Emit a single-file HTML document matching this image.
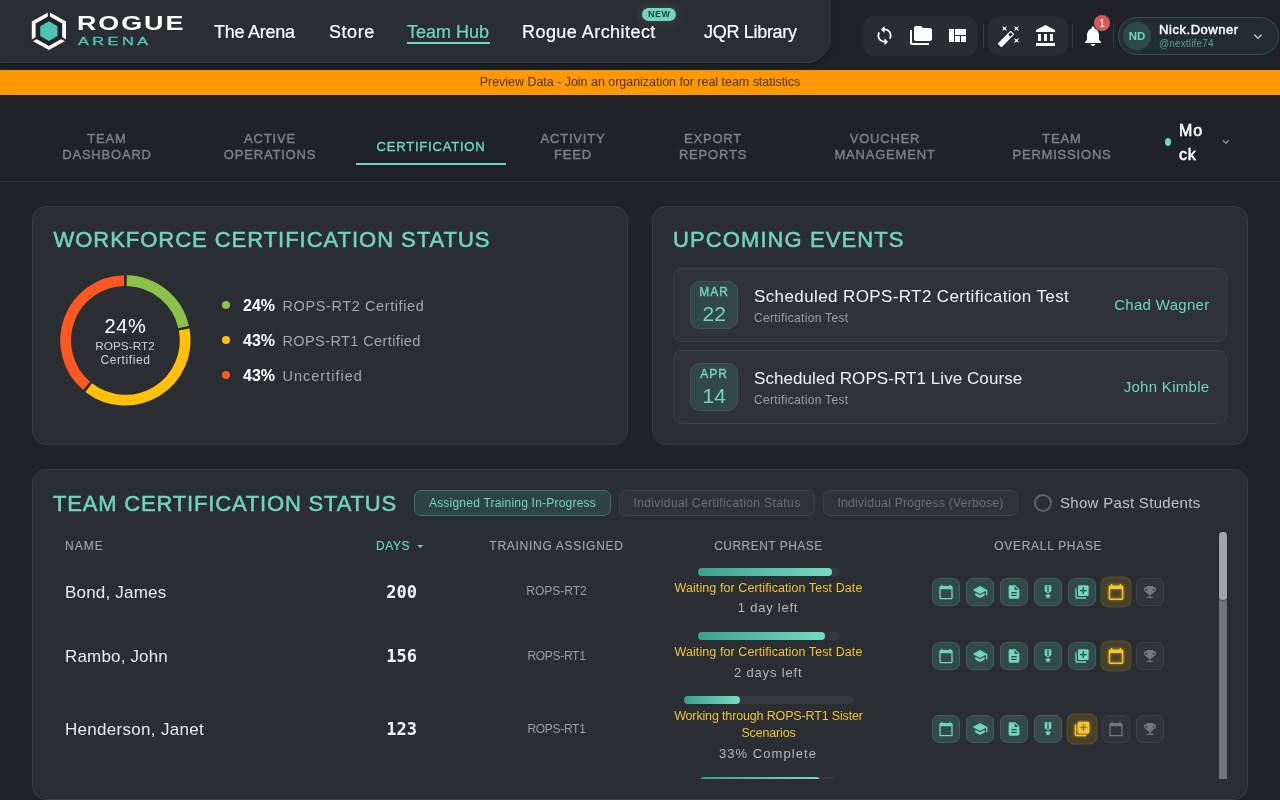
<!DOCTYPE html>
<html lang="en">
<head>
<meta charset="utf-8">
<title>Rogue Arena - Team Hub - Certification</title>
<style>
*{box-sizing:border-box;margin:0;padding:0}
html,body{width:1280px;height:800px;overflow:hidden;background:#1f2226;font-family:"Liberation Sans",sans-serif;color:#fff}
.abs{position:absolute}
.t{position:absolute;white-space:nowrap;line-height:1}
.c{transform:translateX(-50%);text-align:center}
#hdr{position:absolute;left:-1px;top:-1px;width:832px;height:64px;background:#2a2d32;border:1px solid #373a40;border-bottom-right-radius:25px;box-shadow:0 2px 6px rgba(0,0,0,.22)}
.nav{font-size:18px;color:#fff;top:22.600px;-webkit-text-stroke:.2px}
.grp{position:absolute;background:#292c31;border-radius:12px}
.sep{position:absolute;width:1px;background:#383b41;top:24px;height:24px}
svg.i{position:absolute;fill:#fff}
#banner{position:absolute;left:0;top:70px;width:1280px;height:25px;background:#fe9905}
.tab{-webkit-text-stroke:.4px;font-size:13px;letter-spacing:.8px;color:#7d8187;line-height:16px;text-align:center;transform:translateX(-50%)}
.card{position:absolute;background:#2a2d32;border:1px solid #373a40;border-radius:14px}
.h{-webkit-text-stroke:.5px;font-size:22px;letter-spacing:.97px;color:#6fd6bf}
.ev{position:absolute;left:673px;width:554px;height:74px;background:#2f3238;border:1px solid #3b3e44;border-radius:9px}
.db{position:absolute;left:690px;width:48px;height:48px;background:#324746;border:1px solid #3b5955;border-radius:10px}
.chip{position:absolute;top:490px;height:26px;border-radius:7px;font-size:12px;line-height:24px;text-align:center;white-space:nowrap}
.chip.on{background:#2e4442;border:1px solid #407268;color:#6fd6bf}
.chip.off{background:#2f3237;border:1px solid #3e4147;color:#6a6e75}
.th{-webkit-text-stroke:.12px;font-size:12px;letter-spacing:1.2px;color:#a3a7ad}
.nm{font-size:17px;letter-spacing:.6px;color:#e9eaec;left:65px}
.dy{font-family:"DejaVu Sans Mono",monospace;font-weight:bold;font-size:17px;color:#f2f3f4}
.tr{font-size:12px;color:#9a9ea5}
.bar{position:absolute;height:8px;border-radius:4px;background:#34373d}
.bar i{position:absolute;left:0;top:0;height:8px;border-radius:4px;background:linear-gradient(90deg,#3f9f8e,#74dcc5)}
.ph{font-size:12.5px;letter-spacing:.09px;color:#f0c33c;line-height:17px;text-align:center;transform:translateX(-50%)}
.sub{font-size:13px;letter-spacing:.77px;color:#b4b7bc}
.ib{position:absolute;width:28px;height:28px;border-radius:7px;background:#33494a;border:1px solid #3d635d}
.ib svg{position:absolute;left:5px;top:5px;width:16px;height:16px;fill:#6fd6bf}
.ib.y{background:#474129;border-color:#5a4f2b;transform:scale(1.1)}
.ib.y svg{fill:#f7c52f;filter:drop-shadow(0 0 1.500px rgba(247,197,47,.7))}
.ib.g{background:#30333a;border-color:#3d4046}
.ib.g svg{fill:#72767d}
.teal{color:#6fd6bf !important}
#clip{position:absolute;left:34px;top:530px;width:1212px;height:249.300px;overflow:hidden}
</style>
</head>
<body>
<div id="root" style="position:absolute;left:0;top:0;width:1280px;height:800px;overflow:hidden;will-change:transform">
<!-- HEADER -->
<div id="hdr"></div>
<svg class="abs" style="left:0;top:0" width="90" height="62" viewBox="0 0 90 62">
 <polygon points="48.90,12.10 66.00,21.60 66.00,40.60 48.90,50.10 31.80,40.60 31.80,21.60" fill="#fff"/>
 <path d="M48.90 31.10 L48.90 7.35 M48.90 31.10 L70.28 42.98 M48.90 31.10 L27.52 42.98" stroke="#2a2d32" stroke-width="2.200" fill="none"/>
 <polygon points="48.90,16.10 62.20,23.60 62.20,38.60 48.90,46.10 35.60,38.60 35.60,23.60" fill="#202327"/>
 <polygon points="48.90,21.25 57.50,26.18 57.50,36.02 48.90,40.95 40.30,36.02 40.30,26.18" fill="#4fc4b3"/>
</svg>
<div class="t" id="lg1" style="left:76.700px;top:13.800px;font-size:19.500px;font-weight:bold;letter-spacing:1.400px;color:#fff;transform:scaleX(1.38);transform-origin:0 0">ROGUE</div>
<div class="t" id="lg2" style="left:78px;top:36px;font-size:10.500px;-webkit-text-stroke:.3px;letter-spacing:2.250px;color:#4fc4b3;transform:scaleX(1.55);transform-origin:0 0">ARENA</div>
<div class="t nav" id="n1" style="left:214px;letter-spacing:-.25px">The Arena</div>
<div class="t nav" id="n2" style="left:329px;letter-spacing:.55px">Store</div>
<div class="t nav teal" id="n3" style="left:407px">Team Hub</div>
<div class="abs" style="left:407px;top:42px;width:83px;height:2px;background:#6fd6bf"></div>
<div class="t nav" id="n4" style="left:522px;letter-spacing:.45px">Rogue Architect</div>
<div class="t" id="new" style="left:642px;top:8px;width:34px;height:12.500px;border-radius:6.500px;background:#6fd6bf;color:#1f3a36;font-size:9px;font-weight:bold;letter-spacing:.4px;text-indent:.4px;line-height:13px;text-align:center;box-shadow:0 0 9px 2px rgba(200,220,220,.13)">NEW</div>
<div class="t nav" id="n5" style="left:704px;letter-spacing:-.3px">JQR Library</div>
<div id="hdrR">
<div class="grp" style="left:863px;top:16px;width:115px;height:40px"></div>
<svg class="i" style="left:874.200px;top:25px" width="21" height="21" viewBox="0 0 24 24"><path d="M12 4V1L8 5l4 4V6c3.310 0 6 2.690 6 6 0 1.010-.25 1.970-.7 2.800l1.460 1.460C19.540 15.030 20 13.570 20 12c0-4.420-3.580-8-8-8zm0 14c-3.310 0-6-2.690-6-6 0-1.010.25-1.970.7-2.800L5.240 7.740C4.460 8.970 4 10.430 4 12c0 4.420 3.580 8 8 8v3l4-4-4-4v3z"/></svg>
<svg class="i" style="left:909px;top:24px" width="24" height="24" viewBox="0 0 24 24"><path d="M3 6H1v13c0 1.100.9 2 2 2h17v-2H3V6z"/><path d="M21 4h-7l-2-2H7c-1.100 0-1.990.9-1.990 2L5 15c0 1.100.9 2 2 2h14c1.100 0 2-.9 2-2V6c0-1.100-.9-2-2-2z"/></svg>
<svg class="i" style="left:944.500px;top:24px" width="24" height="24" viewBox="0 0 24 24"><path d="M10 18h5v-6h-5v6zm-6 0h5V5H4v13zm12 0h5v-6h-5v6zM10 5v6h11V5H10z"/></svg>
<div class="sep" style="left:983px"></div>
<div class="grp" style="left:988px;top:16px;width:80px;height:40px"></div>
<svg class="i" style="left:997px;top:24px" width="24" height="24" viewBox="0 0 24 24"><path d="M7.500 5.600L10 7 8.600 4.500 10 2 7.500 3.400 5 2l1.400 2.500L5 7zm12 9.800L17 14l1.400 2.500L17 19l2.500-1.400L22 19l-1.400-2.500L22 14zM22 2l-2.500 1.400L17 2l1.400 2.500L17 7l2.500-1.400L22 7l-1.400-2.500zm-7.630 5.290c-.39-.39-1.020-.39-1.410 0L1.290 18.960c-.39.39-.39 1.020 0 1.410l2.340 2.340c.39.390 1.020.390 1.410 0L16.700 11.050c.39-.39.39-1.020 0-1.410l-2.330-2.350zm-1.030 5.490l-2.120-2.120 2.440-2.440 2.120 2.120-2.440 2.440z"/></svg>
<svg class="i" style="left:1034px;top:24px" width="24" height="24" viewBox="0 0 24 24"><path d="M4 10v7h3v-7H4zm6 0v7h3v-7h-3zM2 22h19v-3H2v3zm14-12v7h3v-7h-3zm-4.500-9L2 6v2h19V6l-9.500-5z"/></svg>
<div class="sep" style="left:1072px"></div>
<svg class="i" style="left:1081px;top:24px" width="24" height="24" viewBox="0 0 24 24"><path d="M12 22c1.100 0 2-.9 2-2h-4c0 1.100.89 2 2 2zm6-6v-5c0-3.070-1.640-5.640-4.500-6.320V4c0-.83-.67-1.500-1.500-1.500s-1.500.67-1.500 1.500v.68C7.630 5.360 6 7.920 6 11v5l-2 2v1h16v-1l-2-2z"/></svg>
<div class="t" id="badge" style="left:1094px;top:15px;width:16px;height:16px;border-radius:50%;background:#d8575a;color:#fff;font-size:11px;line-height:16px;text-align:center">1</div>
<div class="sep" style="left:1113px"></div>
<div class="abs" id="pill" style="left:1118px;top:17px;width:161px;height:38px;border-radius:19px;background:#222d2f;border:1px solid #37514d"></div>
<div class="t" id="av" style="left:1123px;top:22px;width:28px;height:28px;border-radius:50%;background:#2c4b47;color:#6fd6bf;font-size:11.500px;font-weight:bold;line-height:28px;text-align:center">ND</div>
<div class="t" id="un" style="left:1159px;top:23px;font-size:13px;-webkit-text-stroke:.45px;letter-spacing:.55px;color:#fff">Nick.Downer</div>
<div class="t" id="uh" style="left:1159px;top:39px;font-size:10px;letter-spacing:.15px;color:#4fa391">@nextlife74</div>
<svg class="abs" style="left:1252px;top:32px" width="12" height="9" viewBox="0 0 12 9"><path d="M2.300 2.600 L6 6.200 L9.700 2.600" fill="none" stroke="#b7babf" stroke-width="1.500"/></svg>
</div>
<!-- BANNER -->
<div id="banner"><div class="t c" id="bt" style="left:640px;top:6px;font-size:12.500px;color:#50340a;letter-spacing:-.03px">Preview Data - Join an organization for real team statistics</div></div>
<!-- TABS -->
<div id="tabs">
<div class="t tab" id="tb1" style="left:107px;top:131px">TEAM<br>DASHBOARD</div>
<div class="t tab" id="tb2" style="left:270px;top:131px">ACTIVE<br>OPERATIONS</div>
<div class="t tab teal" id="tb3" style="left:431px;top:139px">CERTIFICATION</div>
<div class="abs" style="left:356px;top:163px;width:150px;height:2px;background:#6fd6bf"></div>
<div class="t tab" id="tb4" style="left:573px;top:131px">ACTIVITY<br>FEED</div>
<div class="t tab" id="tb5" style="left:713px;top:131px">EXPORT<br>REPORTS</div>
<div class="t tab" id="tb6" style="left:885px;top:131px">VOUCHER<br>MANAGEMENT</div>
<div class="t tab" id="tb7" style="left:1062px;top:131px">TEAM<br>PERMISSIONS</div>
<div class="abs" style="left:1164.700px;top:138px;width:6.500px;height:8.200px;border-radius:50%;background:#6fd6bf"></div>
<div class="t" id="mock" style="left:1179px;top:119px;font-size:16px;-webkit-text-stroke:.55px;line-height:24px;color:#fff;letter-spacing:.8px">Mo<br>ck</div>
<svg class="abs" style="left:1221px;top:138px" width="10" height="8" viewBox="0 0 10 8"><path d="M2 2.300 L4.900 5.300 L7.800 2.300" fill="none" stroke="#8d9197" stroke-width="1.300"/></svg>
<div class="abs" style="left:0;top:181px;width:1280px;height:1px;background:#2d3035"></div>
</div>
<!-- CARDS -->
<div id="cards">
<div class="card" style="left:32px;top:206px;width:596px;height:239px"></div>
<div class="t h" id="h1" style="left:53.500px;top:229.200px">WORKFORCE CERTIFICATION STATUS</div>
<svg class="abs" style="left:0;top:0" width="640" height="460" viewBox="0 0 640 460"><g fill="none" stroke-width="10.800"><path d="M126.76 280.62 A59.8 59.8 0 0 1 183.66 326.91" stroke="#8bc34a"/><path d="M184.21 329.56 A59.8 59.8 0 0 1 88.72 387.63" stroke="#ffc107"/><path d="M86.62 385.92 A59.8 59.8 0 0 1 124.04 280.62" stroke="#ff5722"/></g></svg>
<div class="t c" id="d1" style="left:125.500px;top:315.900px;font-size:20px;color:#fff;letter-spacing:.7px">24%</div>
<div class="t c" id="d2" style="left:125px;top:340.500px;font-size:11.800px;color:#cfd1d4">ROPS-RT2</div>
<div class="t c" id="d3" style="left:125.500px;top:354px;font-size:12px;color:#cfd1d4;letter-spacing:.6px">Certified</div>
<div class="abs" style="left:222px;top:301px;width:8px;height:8px;border-radius:50%;background:#8bc34a"></div>
<div class="abs" style="left:222px;top:336px;width:8px;height:8px;border-radius:50%;background:#ffc107"></div>
<div class="abs" style="left:222px;top:371px;width:8px;height:8px;border-radius:50%;background:#ff5722"></div>
<div class="t" id="l1a" style="left:243px;top:297.7px;font-size:16px;font-weight:bold;color:#fff">24%</div>
<div class="t" id="l1b" style="left:282.500px;top:298.5px;font-size:14.500px;letter-spacing:.6px;color:#a3a7ad">ROPS-RT2 Certified</div>
<div class="t" id="l2a" style="left:243px;top:332.7px;font-size:16px;font-weight:bold;color:#fff">43%</div>
<div class="t" id="l2b" style="left:282.500px;top:333.5px;font-size:14.500px;letter-spacing:.4px;color:#a3a7ad">ROPS-RT1 Certified</div>
<div class="t" id="l3a" style="left:243px;top:367.7px;font-size:16px;font-weight:bold;color:#fff">43%</div>
<div class="t" id="l3b" style="left:282.500px;top:368.5px;font-size:14.500px;letter-spacing:1px;color:#a3a7ad">Uncertified</div>

<div class="card" style="left:652px;top:206px;width:596px;height:239px"></div>
<div class="t h" id="h2" style="left:673px;top:229.200px;letter-spacing:1.1px">UPCOMING EVENTS</div>
<div class="ev" style="top:268px"></div>
<div class="db" style="top:281px"></div>
<div class="t c teal" id="e1m" style="left:714px;top:286.400px;font-size:12px;letter-spacing:1px;-webkit-text-stroke:.35px">MAR</div>
<div class="t c teal" id="e1d" style="left:714.200px;top:302.600px;font-size:21px">22</div>
<div class="t" id="e1t" style="left:754px;top:287.700px;font-size:17px;letter-spacing:.39px;color:#f1f2f3">Scheduled ROPS-RT2 Certification Test</div>
<div class="t" id="e1s" style="left:754px;top:312px;font-size:12px;letter-spacing:.33px;color:#9a9ea5">Certification Test</div>
<div class="t teal" id="e1n" style="right:70.500px;top:296.700px;font-size:15px;letter-spacing:.3px;color:#5ec4ad">Chad Wagner</div>
<div class="ev" style="top:350px"></div>
<div class="db" style="top:363px"></div>
<div class="t c teal" id="e2m" style="left:714px;top:368.400px;font-size:12px;letter-spacing:1px;-webkit-text-stroke:.35px">APR</div>
<div class="t c teal" id="e2d" style="left:714.200px;top:384.600px;font-size:21px">14</div>
<div class="t" id="e2t" style="left:754px;top:369.700px;font-size:17px;letter-spacing:.07px;color:#f1f2f3">Scheduled ROPS-RT1 Live Course</div>
<div class="t" id="e2s" style="left:754px;top:394px;font-size:12px;letter-spacing:.33px;color:#9a9ea5">Certification Test</div>
<div class="t teal" id="e2n" style="right:70.500px;top:378.700px;font-size:15px;letter-spacing:.3px;color:#5ec4ad">John Kimble</div>

<div class="card" style="left:32px;top:469px;width:1216px;height:331px"></div>
<div class="t h" id="h3" style="left:53px;top:492.700px;letter-spacing:.82px">TEAM CERTIFICATION STATUS</div>
<div class="chip on" id="c1" style="left:414px;width:197px;letter-spacing:.22px">Assigned Training In-Progress</div>
<div class="chip off" id="c2" style="left:619px;width:196px;letter-spacing:.4px">Individual Certification Status</div>
<div class="chip off" id="c3" style="left:823px;width:195px;letter-spacing:.3px">Individual Progress (Verbose)</div>
<div class="abs" style="left:1034px;top:494px;width:18px;height:18px;border-radius:50%;border:2px solid #5f636a"></div>
<div class="t" id="sps" style="left:1060px;top:495.200px;font-size:15px;letter-spacing:.3px;color:#c0c2c7">Show Past Students</div>
<div class="t th" id="th1" style="left:65px;top:540px;letter-spacing:1px">NAME</div>
<div class="t th teal" id="th2" style="left:376px;top:540px;letter-spacing:.6px">DAYS</div>
<svg class="i" style="left:412.800px;top:538.500px;fill:#6fd6bf" width="14.400" height="14.400" viewBox="0 0 24 24"><path d="M7 10l5 5 5-5z"/></svg>
<div class="t th c" id="th3" style="left:556.500px;top:540px;letter-spacing:.72px">TRAINING ASSIGNED</div>
<div class="t th c" id="th4" style="left:768.500px;top:540px;letter-spacing:.47px">CURRENT PHASE</div>
<div class="t th c" id="th5" style="left:1048.300px;top:540px;letter-spacing:.7px">OVERALL PHASE</div>
<div id="clip"><div class="abs" id="rows" style="left:-34px;top:-530px;width:1280px;height:900px">
<div class="t nm" id="r1n" style="top:583.900px;letter-spacing:.2px">Bond, James</div>
<div class="t dy c" id="r1d" style="left:401.600px;top:584.200px">200</div>
<div class="t tr c" id="r1t" style="left:556.500px;top:585.300px">ROPS-RT2</div>
<div class="bar" style="left:698px;top:568px;width:142px"><i style="width:134px"></i></div>
<div class="t ph" id="r1p" style="left:768.500px;top:580px">Waiting for Certification Test Date</div>
<div class="t sub c" id="r1s" style="left:768px;top:601px">1 day left</div>
<div class="ib" style="left:932px;top:578px"><svg viewBox="0 0 24 24"><path d="M20 3h-1V1h-2v2H7V1H5v2H4c-1.100 0-2 .9-2 2v16c0 1.100.9 2 2 2h16c1.100 0 2-.9 2-2V5c0-1.100-.9-2-2-2zm0 18H4V8h16v13z"/></svg></div>
<div class="ib" style="left:966px;top:578px"><svg viewBox="0 0 24 24"><path d="M5 13.180v4L12 21l7-3.820v-4L12 17l-7-3.820zM12 3L1 9l11 6 9-4.910V17h2V9L12 3z"/></svg></div>
<div class="ib" style="left:1000px;top:578px"><svg viewBox="0 0 24 24"><path d="M14 2H6c-1.100 0-1.990.9-1.990 2L4 20c0 1.100.89 2 1.990 2H18c1.100 0 2-.9 2-2V8l-6-6zm2 16H8v-2h8v2zm0-4H8v-2h8v2zm-3-5V3.500L18.500 9H13z"/></svg></div>
<div class="ib" style="left:1034px;top:578px"><svg viewBox="0 0 24 24"><path d="M17 10.430V2H7v8.430c0 .35.18.68.49.86l4.180 2.510-.99 2.340-3.410.29 2.590 2.240L9.070 22 12 20.230 14.930 22l-.78-3.330 2.590-2.240-3.410-.29-.99-2.340 4.180-2.510c.3-.18.48-.5.48-.86zm-4 1.800l-1 .6-1-.6V3h2v9.230z"/></svg></div>
<div class="ib" style="left:1068px;top:578px"><svg viewBox="0 0 24 24"><path d="M4 6H2v14c0 1.100.9 2 2 2h14v-2H4V6zm16-4H8c-1.100 0-2 .9-2 2v12c0 1.100.9 2 2 2h12c1.100 0 2-.9 2-2V4c0-1.100-.9-2-2-2zm-1 9h-4v4h-2v-4H9V9h4V5h2v4h4v2z"/></svg></div>
<div class="ib y" style="left:1102px;top:578px"><svg viewBox="0 0 24 24"><path d="M20 3h-1V1h-2v2H7V1H5v2H4c-1.100 0-2 .9-2 2v16c0 1.100.9 2 2 2h16c1.100 0 2-.9 2-2V5c0-1.100-.9-2-2-2zm0 18H4V8h16v13z"/></svg></div>
<div class="ib g" style="left:1136px;top:578px"><svg viewBox="0 0 24 24"><path d="M19 5h-2V3H7v2H5c-1.100 0-2 .9-2 2v1c0 2.550 1.920 4.630 4.390 4.940.63 1.500 1.980 2.630 3.610 2.960V19H7v2h10v-2h-4v-3.100c1.630-.33 2.980-1.460 3.610-2.960C19.080 12.630 21 10.550 21 8V7c0-1.100-.9-2-2-2zM5 8V7h2v3.820C5.840 10.400 5 9.300 5 8zm14 0c0 1.300-.84 2.400-2 2.820V7h2v1z"/></svg></div>
<div class="t nm" id="r2n" style="top:647.900px;letter-spacing:.17px">Rambo, John</div>
<div class="t dy c" id="r2d" style="left:401.600px;top:648.200px">156</div>
<div class="t tr c" id="r2t" style="left:556.500px;top:649.500px;letter-spacing:-.3px">ROPS-RT1</div>
<div class="bar" style="left:698px;top:632px;width:142px"><i style="width:127px"></i></div>
<div class="t ph" id="r2p" style="left:768.500px;top:644px">Waiting for Certification Test Date</div>
<div class="t sub c" id="r2s" style="left:768.200px;top:666px;letter-spacing:.85px">2 days left</div>
<div class="ib" style="left:932px;top:642px"><svg viewBox="0 0 24 24"><path d="M20 3h-1V1h-2v2H7V1H5v2H4c-1.100 0-2 .9-2 2v16c0 1.100.9 2 2 2h16c1.100 0 2-.9 2-2V5c0-1.100-.9-2-2-2zm0 18H4V8h16v13z"/></svg></div>
<div class="ib" style="left:966px;top:642px"><svg viewBox="0 0 24 24"><path d="M5 13.180v4L12 21l7-3.820v-4L12 17l-7-3.820zM12 3L1 9l11 6 9-4.910V17h2V9L12 3z"/></svg></div>
<div class="ib" style="left:1000px;top:642px"><svg viewBox="0 0 24 24"><path d="M14 2H6c-1.100 0-1.990.9-1.990 2L4 20c0 1.100.89 2 1.990 2H18c1.100 0 2-.9 2-2V8l-6-6zm2 16H8v-2h8v2zm0-4H8v-2h8v2zm-3-5V3.500L18.500 9H13z"/></svg></div>
<div class="ib" style="left:1034px;top:642px"><svg viewBox="0 0 24 24"><path d="M17 10.430V2H7v8.430c0 .35.18.68.49.86l4.180 2.510-.99 2.340-3.410.29 2.590 2.240L9.070 22 12 20.230 14.930 22l-.78-3.330 2.590-2.240-3.410-.29-.99-2.340 4.180-2.510c.3-.18.48-.5.48-.86zm-4 1.800l-1 .6-1-.6V3h2v9.230z"/></svg></div>
<div class="ib" style="left:1068px;top:642px"><svg viewBox="0 0 24 24"><path d="M4 6H2v14c0 1.100.9 2 2 2h14v-2H4V6zm16-4H8c-1.100 0-2 .9-2 2v12c0 1.100.9 2 2 2h12c1.100 0 2-.9 2-2V4c0-1.100-.9-2-2-2zm-1 9h-4v4h-2v-4H9V9h4V5h2v4h4v2z"/></svg></div>
<div class="ib y" style="left:1102px;top:642px"><svg viewBox="0 0 24 24"><path d="M20 3h-1V1h-2v2H7V1H5v2H4c-1.100 0-2 .9-2 2v16c0 1.100.9 2 2 2h16c1.100 0 2-.9 2-2V5c0-1.100-.9-2-2-2zm0 18H4V8h16v13z"/></svg></div>
<div class="ib g" style="left:1136px;top:642px"><svg viewBox="0 0 24 24"><path d="M19 5h-2V3H7v2H5c-1.100 0-2 .9-2 2v1c0 2.550 1.920 4.630 4.390 4.940.63 1.500 1.980 2.630 3.610 2.960V19H7v2h10v-2h-4v-3.100c1.630-.33 2.980-1.460 3.610-2.960C19.080 12.630 21 10.550 21 8V7c0-1.100-.9-2-2-2zM5 8V7h2v3.820C5.840 10.400 5 9.300 5 8zm14 0c0 1.300-.84 2.400-2 2.820V7h2v1z"/></svg></div>
<div class="t nm" id="r3n" style="top:721px;letter-spacing:.3px">Henderson, Janet</div>
<div class="t dy c" id="r3d" style="left:401.600px;top:721.200px">123</div>
<div class="t tr c" id="r3t" style="left:556.500px;top:723px;letter-spacing:-.3px">ROPS-RT1</div>
<div class="bar" style="left:684px;top:696px;width:170px"><i style="width:56px"></i></div>
<div class="t ph" id="r3p" style="left:768.500px;top:708px;letter-spacing:-.15px">Working through ROPS-RT1 Sister<br>Scenarios</div>
<div class="t sub c" id="r3s" style="left:768px;top:746.500px;letter-spacing:1.07px">33% Complete</div>
<div class="ib" style="left:932px;top:715px"><svg viewBox="0 0 24 24"><path d="M20 3h-1V1h-2v2H7V1H5v2H4c-1.100 0-2 .9-2 2v16c0 1.100.9 2 2 2h16c1.100 0 2-.9 2-2V5c0-1.100-.9-2-2-2zm0 18H4V8h16v13z"/></svg></div>
<div class="ib" style="left:966px;top:715px"><svg viewBox="0 0 24 24"><path d="M5 13.180v4L12 21l7-3.820v-4L12 17l-7-3.820zM12 3L1 9l11 6 9-4.910V17h2V9L12 3z"/></svg></div>
<div class="ib" style="left:1000px;top:715px"><svg viewBox="0 0 24 24"><path d="M14 2H6c-1.100 0-1.990.9-1.990 2L4 20c0 1.100.89 2 1.990 2H18c1.100 0 2-.9 2-2V8l-6-6zm2 16H8v-2h8v2zm0-4H8v-2h8v2zm-3-5V3.500L18.500 9H13z"/></svg></div>
<div class="ib" style="left:1034px;top:715px"><svg viewBox="0 0 24 24"><path d="M17 10.430V2H7v8.430c0 .35.18.68.49.86l4.180 2.510-.99 2.340-3.410.29 2.590 2.240L9.070 22 12 20.230 14.930 22l-.78-3.330 2.590-2.240-3.410-.29-.99-2.340 4.180-2.510c.3-.18.48-.5.48-.86zm-4 1.800l-1 .6-1-.6V3h2v9.230z"/></svg></div>
<div class="ib y" style="left:1068px;top:715px"><svg viewBox="0 0 24 24"><path d="M4 6H2v14c0 1.100.9 2 2 2h14v-2H4V6zm16-4H8c-1.100 0-2 .9-2 2v12c0 1.100.9 2 2 2h12c1.100 0 2-.9 2-2V4c0-1.100-.9-2-2-2zm-1 9h-4v4h-2v-4H9V9h4V5h2v4h4v2z"/></svg></div>
<div class="ib g" style="left:1102px;top:715px"><svg viewBox="0 0 24 24"><path d="M20 3h-1V1h-2v2H7V1H5v2H4c-1.100 0-2 .9-2 2v16c0 1.100.9 2 2 2h16c1.100 0 2-.9 2-2V5c0-1.100-.9-2-2-2zm0 18H4V8h16v13z"/></svg></div>
<div class="ib g" style="left:1136px;top:715px"><svg viewBox="0 0 24 24"><path d="M19 5h-2V3H7v2H5c-1.100 0-2 .9-2 2v1c0 2.550 1.920 4.630 4.390 4.940.63 1.500 1.980 2.630 3.610 2.960V19H7v2h10v-2h-4v-3.100c1.630-.33 2.980-1.460 3.610-2.960C19.080 12.630 21 10.550 21 8V7c0-1.100-.9-2-2-2zM5 8V7h2v3.820C5.840 10.400 5 9.300 5 8zm14 0c0 1.300-.84 2.400-2 2.820V7h2v1z"/></svg></div>
<div class="bar" style="left:700px;top:777.400px;width:136px"><i style="width:120px"></i></div>
</div></div>
<div class="abs" style="left:1219px;top:532px;width:8px;height:247px;background:#71747c;border-radius:4px 4px 0 0"></div>
<div class="abs" style="left:1219px;top:532px;width:8px;height:68px;background:#a1a4ac;border-radius:4px;box-shadow:0 1px 2px rgba(0,0,0,.35)"></div>
</div>
</div>
</body>
</html>
